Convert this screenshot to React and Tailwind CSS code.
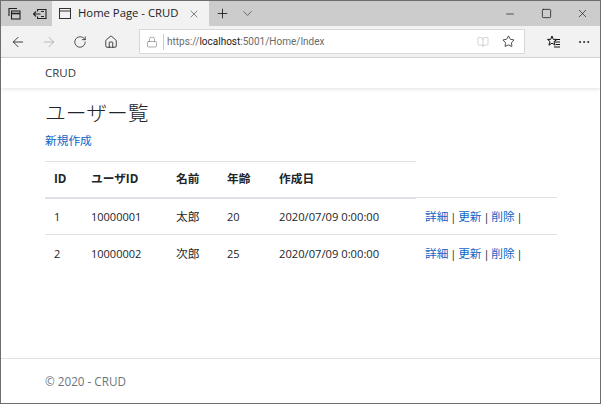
import React from 'react';
import { ArrowLeft, ArrowRight, RotateCw, Home, Lock, BookOpen, Star, MoreHorizontal, X, Plus, ChevronDown, Minus, Square } from 'lucide-react';

const users = [
  { id: 1, userId: '10000001', name: '太郎', age: 20, date: '2020/07/09 0:00:00' },
  { id: 2, userId: '10000002', name: '次郎', age: 25, date: '2020/07/09 0:00:00' },
];

const cjk = "text-[11.7px]";

const Actions = () => (
  <td className="border-t border-[#dee2e6] pl-[9px] pt-[1px] align-middle [word-spacing:-1px]">
    <a className={`${cjk} text-[#0f66c8]`}>詳細</a> | <a className={`${cjk} text-[#0f66c8]`}>更新</a> | <a className={`${cjk} text-[#0f66c8]`}>削除</a> |
  </td>
);

const App = () => {
  return (
    <div className="flex h-[404px] w-[601px] flex-col overflow-hidden border border-[#6e6e6e] bg-white text-[11px] text-[#212529] [font-family:'Open_Sans','Noto_Sans_CJK_JP',sans-serif]">
      {/* タブバー */}
      <div className="flex h-[25px] shrink-0 items-stretch bg-[#cccccc]">
        <div className="flex w-[26px] items-center justify-center pl-[1px]">
          <svg width="13" height="13" viewBox="0 0 13 13" fill="none" stroke="#222" strokeWidth="1.1">
            <path d="M1 9V1.5h8" />
            <rect x="3.5" y="4" width="8.5" height="8" fill="#ccc" />
            <path d="M3.5 6.5h8.5" strokeWidth="1.6" />
          </svg>
        </div>
        <div className="flex w-[25px] items-center justify-center">
          <svg width="14" height="12" viewBox="0 0 14 12" fill="none" stroke="#222" strokeWidth="1.1">
            <path d="M4.5 3.5V1.5h8.5v9H4.5V8.5" />
            <path d="M0.5 6h7M3 3.5L0.5 6 3 8.5M8 3.5h3M8 8.5h3" />
          </svg>
        </div>
        <div className="flex w-[157px] items-center bg-[#f2f2f2] pl-[7px]">
          <svg width="12" height="11" viewBox="0 0 12 11" fill="none" stroke="#333" strokeWidth="1">
            <rect x="0.5" y="0.5" width="11" height="10" />
            <path d="M0.5 3h11" />
          </svg>
          <span className="ml-[7px] text-[11.3px] text-[#222]">Home Page - CRUD</span>
          <X className="ml-auto mr-[9px] h-[12px] w-[12px] text-[#444]" strokeWidth={1.3} />
        </div>
        <div className="flex w-[26px] items-center justify-center">
          <Plus className="h-[15px] w-[15px] text-[#111]" strokeWidth={1.3} />
        </div>
        <div className="flex w-[25px] items-center justify-center">
          <ChevronDown className="h-[15px] w-[15px] text-[#444]" strokeWidth={1.2} />
        </div>
        <div className="ml-auto flex items-center pr-[0px]">
          <div className="flex w-[36px] justify-center"><Minus className="h-[12px] w-[12px] text-[#111]" strokeWidth={1.3} /></div>
          <div className="flex w-[36px] justify-center"><Square className="h-[11px] w-[11px] text-[#111]" strokeWidth={1.6} /></div>
          <div className="flex w-[36px] justify-center"><X className="h-[13px] w-[13px] text-[#111]" strokeWidth={1.2} /></div>
        </div>
      </div>

      {/* ツールバー */}
      <div className="flex h-[32px] shrink-0 items-center border-b border-[#d9d9d9] bg-[#f2f2f2]">
        <div className="flex w-[33px] justify-center"><ArrowLeft className="h-[16px] w-[16px] text-[#111]" strokeWidth={1.2} /></div>
        <div className="flex w-[30px] justify-center"><ArrowRight className="h-[16px] w-[16px] text-[#aaa]" strokeWidth={1.2} /></div>
        <div className="flex w-[31px] justify-center"><RotateCw className="h-[14px] w-[14px] text-[#111]" strokeWidth={1.2} /></div>
        <div className="flex w-[32px] justify-center"><Home className="h-[14px] w-[14px] text-[#111]" strokeWidth={1.3} /></div>
        <div className="ml-[12px] flex h-[25px] w-[386px] items-center border border-[#d9d9d9] bg-white">
          <div className="flex w-[23px] justify-center"><Lock className="h-[12px] w-[12px] text-[#777]" strokeWidth={1.2} /></div>
          <div className="h-[16px] w-px bg-[#ccc]" />
          <span className="ml-[3px] text-[10px] text-[#6b6b6b] [font-family:Roboto,sans-serif]">https://<span className="text-[#222]">localhost</span>:5001/Home/Index</span>
          <BookOpen className="ml-auto mr-[13px] h-[12px] w-[12px] text-[#bbb]" strokeWidth={1.2} />
          <Star className="mr-[9px] h-[13px] w-[13px] text-[#111]" strokeWidth={1.4} />
        </div>
        <div className="ml-[21px] flex w-[16px] justify-center">
          <svg width="14" height="13" viewBox="0 0 14 13" fill="none" stroke="#111" strokeWidth="1">
            <path d="M5 1l1.3 3.4H10L7 6.6l1.1 3.6L5 8.1l-3.1 2.1L3 6.6 0.5 4.4H3.7z" />
            <path d="M8 7h5M9 9.5h4M7 12h6M10 4.5h3" />
          </svg>
        </div>
        <MoreHorizontal className="ml-[15px] h-[14px] w-[14px] text-[#222]" strokeWidth={1.5} />
      </div>

      {/* ナビバー */}
      <nav className="flex h-[30px] shrink-0 items-center bg-white pl-[44px] shadow-[0_1px_4px_rgba(0,0,0,0.12)]">
        <span className="text-[11.5px] text-[#343a40]">CRUD</span>
      </nav>

      {/* 本文 */}
      <main className="flex-1 pl-[44px] pt-[12px]">
        <h1 className="text-[20.8px] font-light leading-[26px] text-[#212529]">ユーザー覧</h1>
        <p className="mt-[6px] leading-[16px]"><a className={`${cjk} text-[#0f66c8]`}>新規作成</a></p>
        <table className="mt-[12px] w-[512px] table-fixed border-collapse">
          <colgroup>
            <col className="w-[37px]" />
            <col className="w-[85px]" />
            <col className="w-[51px]" />
            <col className="w-[52px]" />
            <col className="w-[146px]" />
            <col className="w-[141px]" />
          </colgroup>
          <thead>
            <tr className="h-[36px] text-left text-[11.7px]">
              <th className="border-t border-b-2 border-[#dee2e6] pl-[9px] font-bold">ID</th>
              <th className="border-t border-b-2 border-[#dee2e6] pl-[9px] font-bold">ユーザID</th>
              <th className="border-t border-b-2 border-[#dee2e6] pl-[9px] font-bold">名前</th>
              <th className="border-t border-b-2 border-[#dee2e6] pl-[9px] font-bold">年齢</th>
              <th className="border-t border-b-2 border-[#dee2e6] pl-[9px] font-bold">作成日</th>
            </tr>
          </thead>
          <tbody>
            {users.map((u) => (
              <tr key={u.id} className="h-[37px]">
                <td className="border-t border-[#dee2e6] pl-[9px] pt-[1px]">{u.id}</td>
                <td className="border-t border-[#dee2e6] pl-[9px] pt-[1px]">{u.userId}</td>
                <td className={`border-t border-[#dee2e6] pl-[9px] pt-[1px] ${cjk}`}>{u.name}</td>
                <td className="border-t border-[#dee2e6] pl-[9px] pt-[1px]">{u.age}</td>
                <td className="border-t border-[#dee2e6] pl-[9px] pt-[2px] text-[11.2px]">{u.date}</td>
                <Actions />
              </tr>
            ))}
          </tbody>
        </table>
      </main>

      {/* フッター */}
      <footer className="flex h-[45px] shrink-0 items-center border-t border-[#dee2e6] pl-[44px] pt-[1px] text-[11.7px] text-[#6c757d]">
        © 2020 - CRUD
      </footer>
    </div>
  );
};

export default App;
